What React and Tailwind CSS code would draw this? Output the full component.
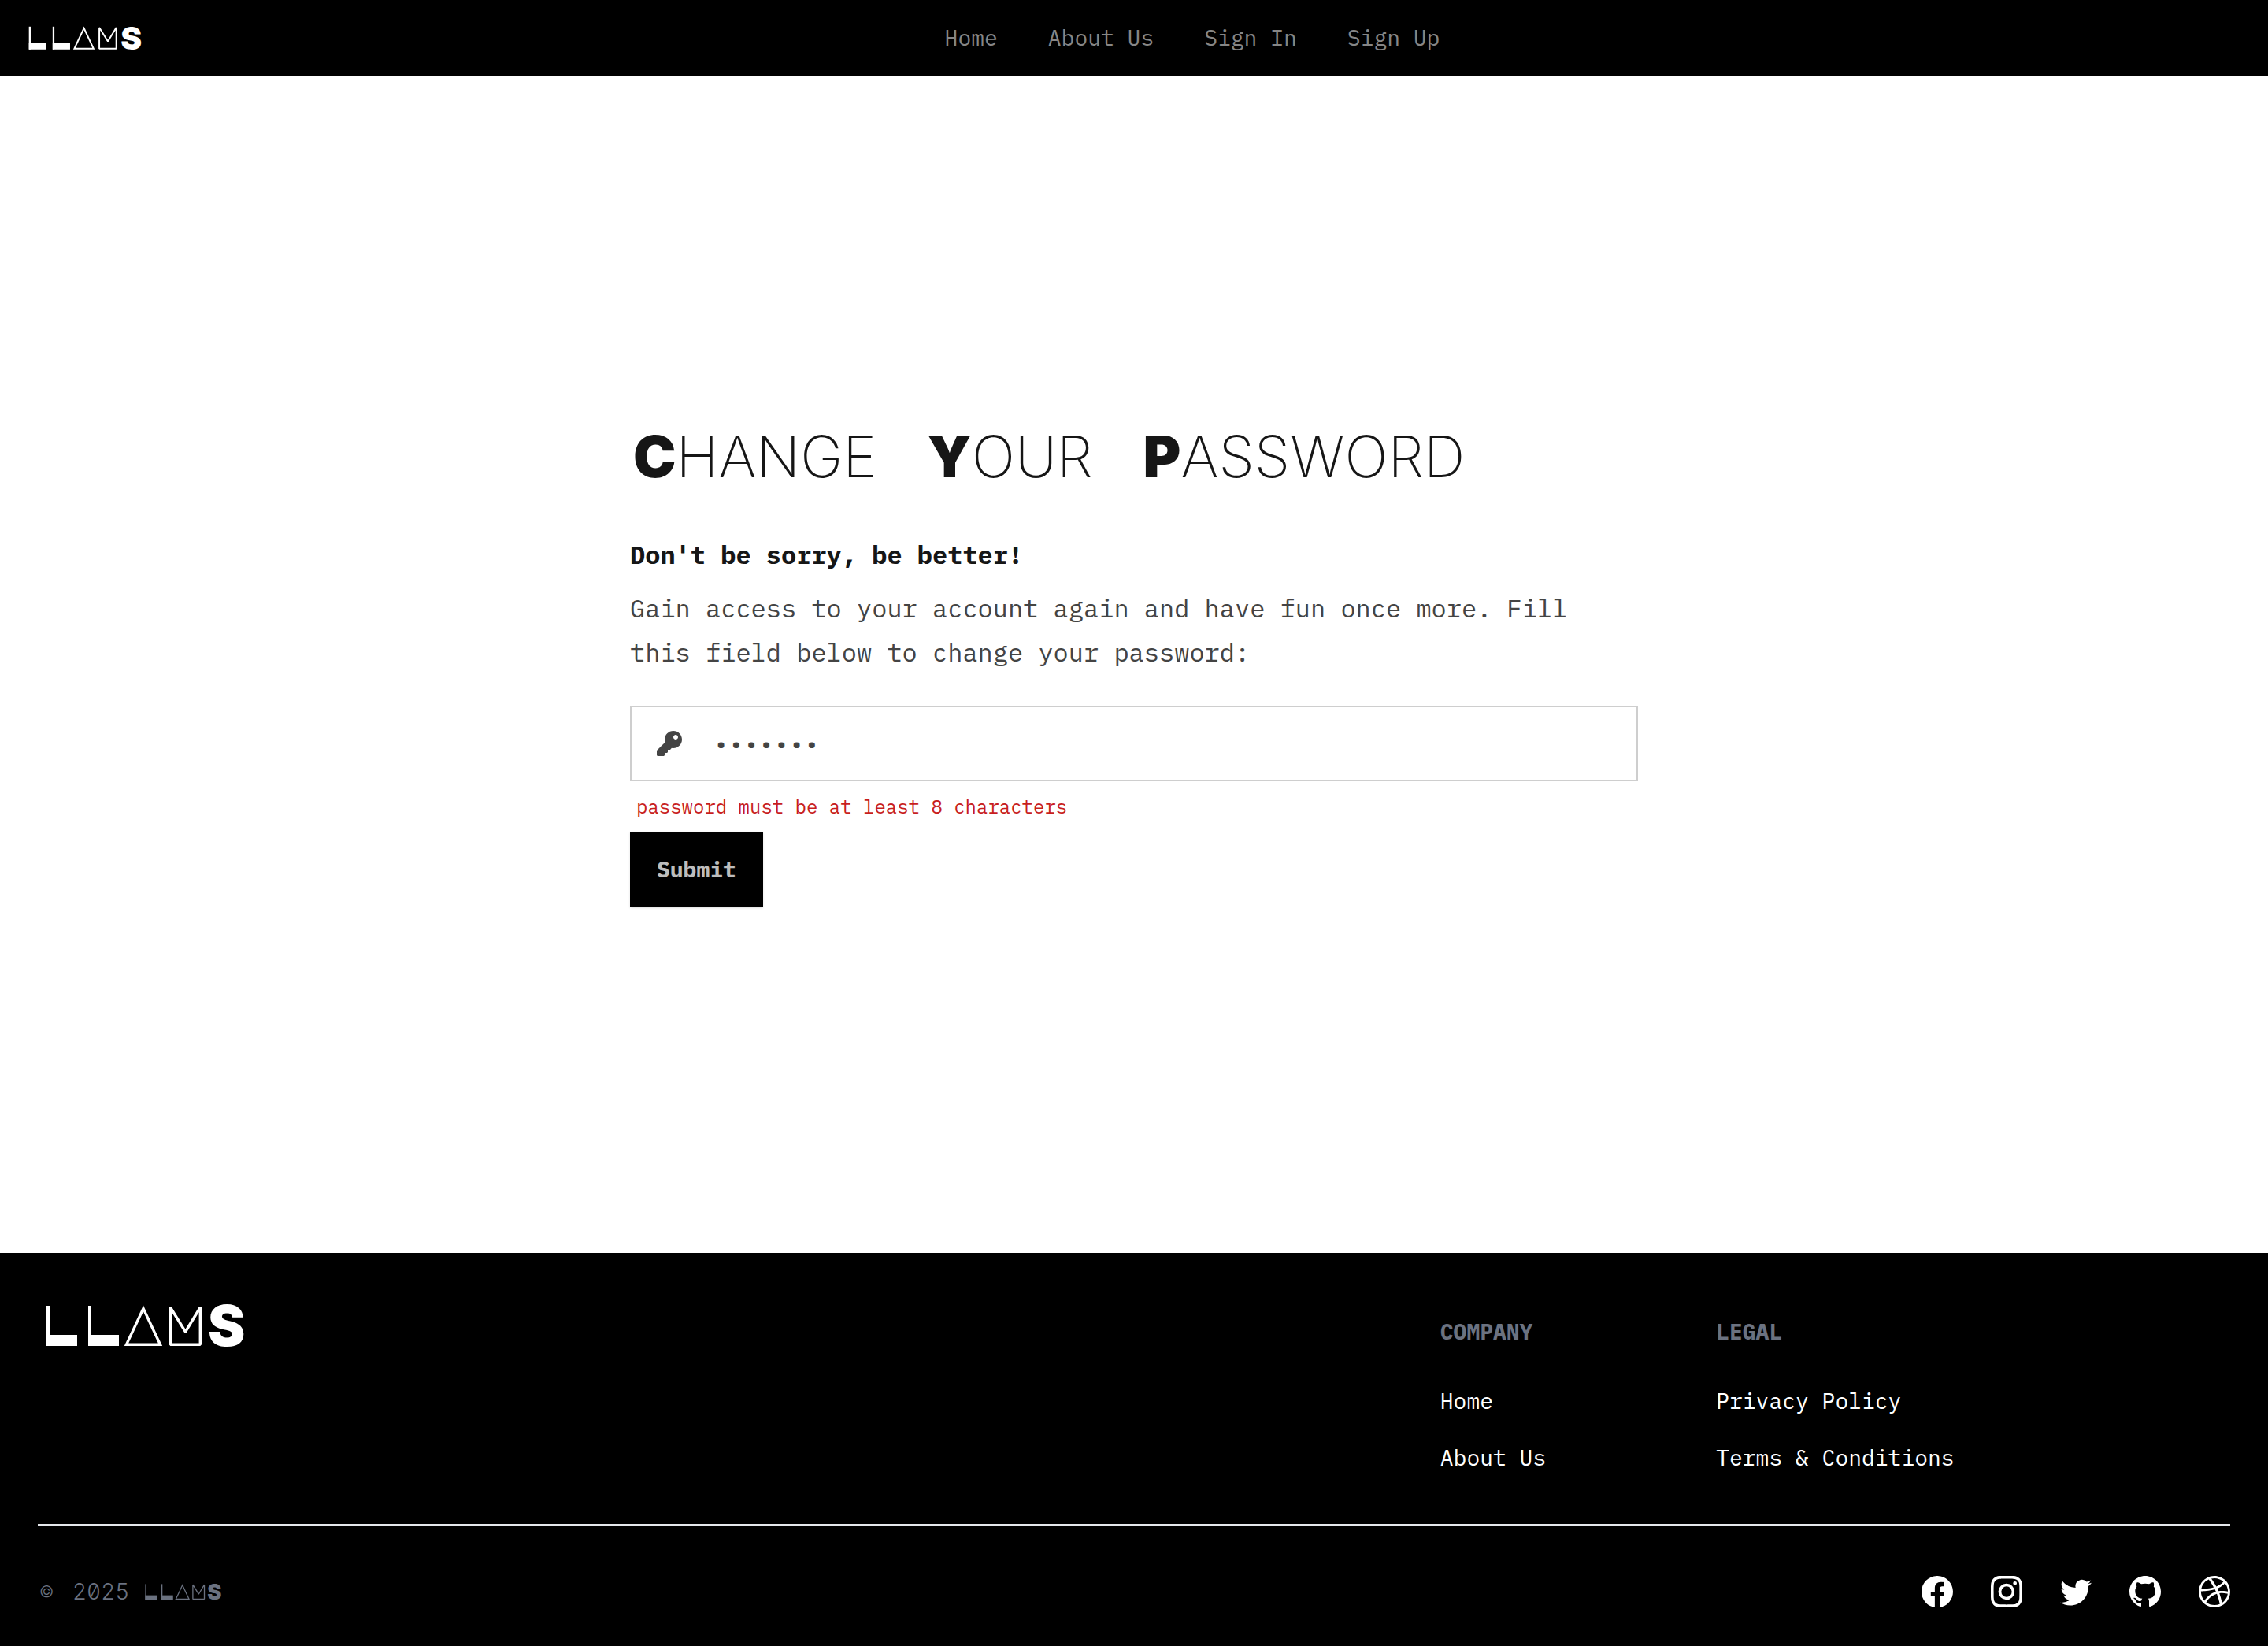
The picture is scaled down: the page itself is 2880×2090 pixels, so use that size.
import React, { useState } from "react";
import { BsFacebook, BsInstagram, BsTwitter, BsGithub, BsDribbble } from "react-icons/bs";
import { FaKey } from "react-icons/fa";

function Logo({ className }) {
  return (
    <svg viewBox="0 -17 260 88" role="img" aria-label="Llams" className={className} fill="currentColor">
      <rect x="1" y="2" width="4" height="51" />
      <rect x="1" y="39" width="39" height="14" />
      <rect x="54" y="2" width="4" height="51" />
      <rect x="54" y="39" width="39" height="14" />
      <path d="M124 5.5 145.5 51.3H102.5Z" fill="none" stroke="currentColor" strokeWidth="3.4" />
      <path
        d="M158.3 51.3V4L177.5 35 196.3 4V51.3Z"
        fill="none"
        stroke="currentColor"
        strokeWidth="3.4"
        strokeLinejoin="bevel"
      />
      <text x="206" y="53" fontSize="71" fontWeight="900" fontFamily="Inter, sans-serif">S</text>
    </svg>
  );
}

const navLinks = ["Home", "About Us", "Sign In", "Sign Up"];

const footerColumns = [
  { title: "COMPANY", links: ["Home", "About Us"] },
  { title: "LEGAL", links: ["Privacy Policy", "Terms & Conditions"] },
];

const socials = [
  { label: "Facebook", Icon: BsFacebook },
  { label: "Instagram", Icon: BsInstagram },
  { label: "Twitter", Icon: BsTwitter },
  { label: "GitHub", Icon: BsGithub },
  { label: "Dribbble", Icon: BsDribbble },
];

function Header() {
  return (
    <header className="flex h-24 items-center bg-black px-9">
      <a href="#" className="text-white">
        <Logo className="h-12.5 w-37" />
      </a>
      <nav className="flex flex-1 justify-center gap-16 text-[28px] leading-10 text-[#868686]">
        {navLinks.map((label) => (
          <a key={label} href="#">{label}</a>
        ))}
      </nav>
    </header>
  );
}

function TitleWord({ children }) {
  return (
    <span>
      <span className="font-black">{children[0]}</span>
      {children.slice(1)}
    </span>
  );
}

function PasswordForm() {
  const [password, setPassword] = useState("llama42");
  return (
    <form className="w-full max-w-7xl" onSubmit={(e) => e.preventDefault()}>
      <h1 className="flex flex-wrap gap-x-16 pl-1 font-['Inter',sans-serif] text-[73px] leading-22 font-extralight text-[#161616] uppercase">
        <TitleWord>Change</TitleWord> <TitleWord>Your</TitleWord> <TitleWord>Password</TitleWord>
      </h1>
      <h2 className="mt-15 text-[32px] leading-10 font-bold text-[#161616]">Don't be sorry, be better!</h2>
      <p id="hint" className="mt-5 text-[32px] leading-14 text-[#444444]">
        Gain access to your account again and have fun once more. Fill this field below to change your password:
      </p>
      <label className="mt-10 flex h-24 items-center gap-10 border-2 border-[#cecece] px-8 text-[#444444]">
        <FaKey className="size-8 shrink-0" aria-hidden="true" />
        <input
          type="password"
          aria-label="New password"
          aria-describedby="hint password-error"
          value={password}
          onChange={(e) => setPassword(e.target.value)}
          className="min-w-0 flex-1 bg-transparent text-[32px] leading-10 outline-none"
        />
      </label>
      <p id="password-error" className="my-3.5 pl-2 text-2xl leading-9 text-[#c81e1e]">
        password must be at least 8 characters
      </p>
      <button type="submit" className="h-24 bg-black px-[34px] text-[28px] leading-10 font-bold text-[#bdbdbd] shadow-sm">
        Submit
      </button>
    </form>
  );
}

function Footer() {
  return (
    <footer className="border-b border-black bg-black px-12 pt-12 pb-12 text-white">
      <div className="flex justify-between">
        <a href="#" className="ml-2.5 self-start">
          <Logo className="h-22 w-65" />
        </a>
        <div className="grid grid-cols-3 gap-12 pt-8">
          {footerColumns.map(({ title, links }) => (
            <div key={title}>
              <h3 className="text-[28px] leading-10 font-bold text-[#6b7280]">{title}</h3>
              <ul className="mt-12 space-y-8 text-[28px] leading-10">
                {links.map((label) => (
                  <li key={label}>
                    <a href="#" className="whitespace-nowrap">{label}</a>
                  </li>
                ))}
              </ul>
            </div>
          ))}
        </div>
      </div>
      <hr className="mt-16 border-t-2 border-[#e5e7eb]" />
      <div className="mt-16 flex items-center justify-between">
        <p className="flex items-center text-[#6b7280]">
          <span className="w-11 pl-0.5 font-['Inter',sans-serif] text-xl font-light">©</span>
          <span className="w-23 font-['Inter',sans-serif] text-[28px] leading-10 font-light tabular-nums slashed-zero">
            2025
          </span>
          <Logo className="h-8.5 w-25" />
        </p>
        <div className="flex gap-12">
          {socials.map(({ label, Icon }) => (
            <a key={label} href="#" aria-label={label}>
              <Icon className="size-10" />
            </a>
          ))}
        </div>
      </div>
    </footer>
  );
}

export default function App() {
  return (
    <div className="flex min-h-screen flex-col bg-white font-['IBM_Plex_Mono','Liberation_Mono',monospace]">
      <Header />
      <main className="flex flex-1 items-center justify-center">
        <PasswordForm />
      </main>
      <Footer />
    </div>
  );
}
